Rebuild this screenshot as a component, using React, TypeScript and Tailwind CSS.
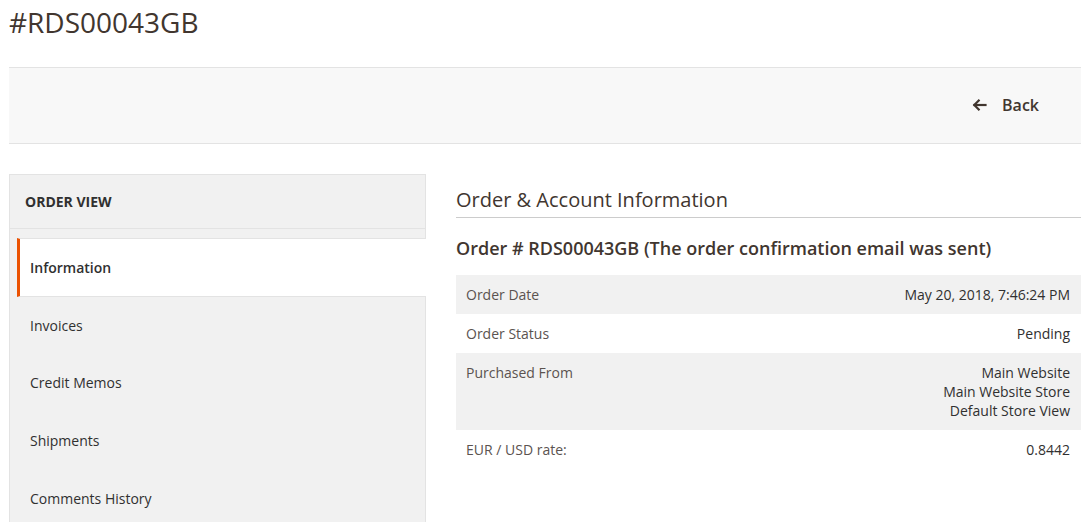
import React from 'react';

const navItems = ['Information', 'Invoices', 'Credit Memos', 'Shipments', 'Comments History'];

const rows: { label: string; value: string[] }[] = [
  { label: 'Order Date', value: ['May 20, 2018, 7:46:24 PM'] },
  { label: 'Order Status', value: ['Pending'] },
  { label: 'Purchased From', value: ['Main Website', 'Main Website Store', 'Default Store View'] },
  { label: 'EUR / USD rate:', value: ['0.8442'] },
];

const BackArrow = () => (
  <svg width="15" height="14" viewBox="0 0 15 14" fill="none" stroke="#41362f" strokeWidth="2.2" strokeLinecap="square">
    <path d="M2.5 7H13.5" />
    <path d="M7.5 1.8L2.3 7L7.5 12.2" strokeLinecap="butt" />
  </svg>
);

export default function App() {
  return (
    <div className="min-h-screen overflow-hidden bg-white pl-[9px] font-['Open_Sans',sans-serif] text-[#303030]">
      <h1 className="h-[67px] pt-[2px] text-[28px] leading-[40px] font-normal text-[#41362f]">#RDS00043GB</h1>

      <div className="flex h-[77px] items-center justify-end border-y border-[#e3e3e3] bg-[#f8f8f8] pr-[42px] pb-[2px]">
        <button className="flex items-center gap-[15px] text-[16px] font-semibold text-[#41362f]">
          <BackArrow />
          <span>Back</span>
        </button>
      </div>

      <div className="mt-[30px] flex gap-[30px]">
        <aside className="w-[417px] shrink-0 border-x border-[#e3e3e3] bg-[#f1f1f1]">
          <div className="flex h-[55px] items-center border-y border-[#e3e3e3] pl-[15px] text-[14px] font-bold uppercase text-[#303030]">
            Order View
          </div>
          <ul className="pt-[9px]">
            {navItems.map((item, i) =>
              i === 0 ? (
                <li
                  key={item}
                  className="relative z-10 -mr-px ml-[7px] flex h-[59px] items-center border-y border-l-[3px] border-[#e3e3e3] border-l-[#eb5202] bg-white pl-[10px] text-[14px] font-semibold text-[#303030]"
                >
                  {item}
                </li>
              ) : (
                <li key={item} className="ml-[7px] flex h-[57.67px] items-center border-l-[3px] border-transparent pl-[10px] pb-[1px] text-[14px] text-[#303030]">
                  {item}
                </li>
              )
            )}
          </ul>
        </aside>

        <main className="flex-1">
          <h2 className="border-b border-[#cccccc] pt-[14px] pb-[5px] text-[20px] leading-[24px] font-normal text-[#41362f]">
            Order &amp; Account Information
          </h2>
          <h3 className="mt-[18px] text-[18px] leading-[24px] font-semibold text-[#41362f]">
            Order # RDS00043GB (The order confirmation email was sent)
          </h3>
          <table className="mt-[15px] mr-px w-[625px] border-collapse text-[14px] leading-[19px]">
            <tbody>
              {rows.map((row, i) => (
                <tr key={row.label} className={i % 2 === 0 ? 'bg-[#f1f1f1]' : 'bg-white'}>
                  <th className="px-[10px] py-[10px] text-left align-top font-normal text-[#5b5350]">{row.label}</th>
                  <td className="pl-[10px] pr-[11px] py-[10px] text-right align-top text-[#303030]">
                    {row.value.map((v) => (
                      <div key={v}>{v}</div>
                    ))}
                  </td>
                </tr>
              ))}
            </tbody>
          </table>
        </main>
      </div>
    </div>
  );
}
